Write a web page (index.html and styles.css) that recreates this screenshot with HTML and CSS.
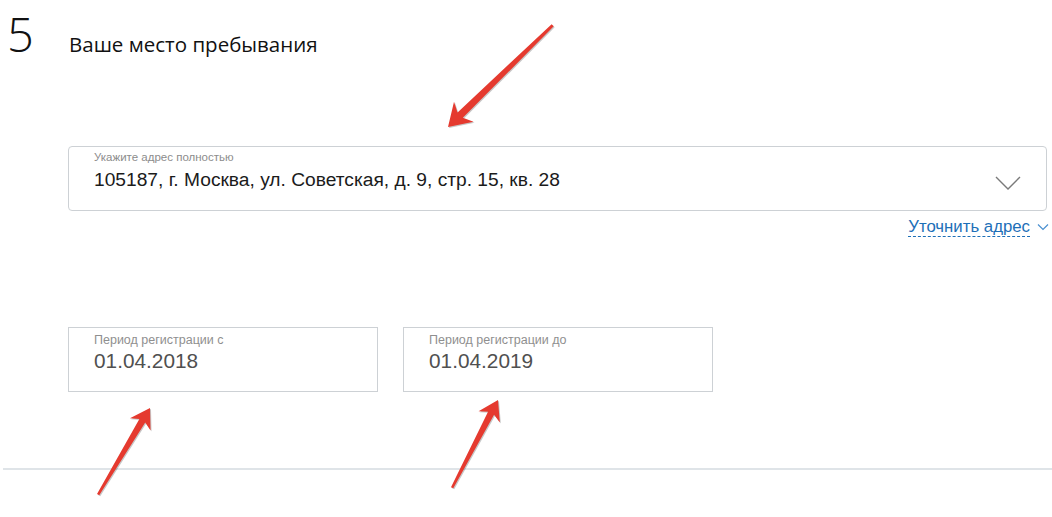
FILE: index.html
```html
<!DOCTYPE html>
<html lang="ru">
<head>
<meta charset="utf-8">
<title>Ваше место пребывания</title>
<link rel="stylesheet" href="styles.css">
</head>
<body>
<div class="page">
  <header class="step-head">
    <span class="step-num">5</span>
    <h2 class="step-title">Ваше место пребывания</h2>
  </header>

  <section class="step-body">
    <div class="field field-address">
      <div class="field-inner">
        <div class="field-label">Укажите адрес полностью</div>
        <div class="field-value">105187, г. Москва, ул. Советская, д. 9, стр. 15, кв. 28</div>
      </div>
      <svg class="select-chevron" width="26" height="14" viewBox="0 0 26 14"><path d="M1 1 L13 13 L25 1" fill="none" stroke="#7a7a7a" stroke-width="1.4"/></svg>
    </div>

    <div class="refine">
      <a class="refine-link" href="#">Уточнить адрес</a>
      <svg class="refine-chevron" width="12" height="8" viewBox="0 0 12 8"><path d="M1 1.5 L6 6.5 L11 1.5" fill="none" stroke="#4a90d0" stroke-width="1.2"/></svg>
    </div>

    <div class="dates">
      <div class="field field-date">
        <div class="field-label date-label">Период регистрации с</div>
        <div class="field-value date-value">01.04.2018</div>
      </div>
      <div class="field field-date">
        <div class="field-label date-label">Период регистрации до</div>
        <div class="field-value date-value">01.04.2019</div>
      </div>
    </div>
  </section>

  <div class="divider"></div>

  <svg class="arrows" width="1052" height="517" viewBox="0 0 1052 517">
    <g fill="#e53a2f">
      <polygon transform="translate(448 127) rotate(135.8)" points="0,0 -22,-14 -17,-3.8 -146,-1.5 -146,1.5 -17,3.8 -22,14"/>
      <polygon transform="translate(150 408) rotate(-59.1)" points="0,0 -19,-12 -15,-3.4 -101,-1.3 -101,1.3 -15,3.4 -19,12"/>
      <polygon transform="translate(498 400) rotate(-62.4)" points="0,0 -19,-12 -15,-3.4 -99,-1.3 -99,1.3 -15,3.4 -19,12"/>
    </g>
  </svg>
</div>
</body>
</html>
```

FILE: styles.css
```css
* { box-sizing: border-box; }

html, body {
  margin: 0;
  padding: 0;
  background: #ffffff;
}

.page {
  position: relative;
  width: 1052px;
  height: 517px;
  overflow: hidden;
  font-family: "Liberation Sans", Arial, sans-serif;
}

.step-head {
  display: flex;
  align-items: baseline;
  height: 70px;
  padding-left: 7px;
  padding-top: 6px;
}

.step-num {
  width: 62px;
  font-family: "Open Sans", sans-serif;
  font-weight: 300;
  font-size: 47px;
  line-height: 56px;
  color: #111;
}

.step-title {
  margin: 0;
  font-family: "Open Sans", sans-serif;
  font-weight: 500;
  font-size: 20.5px;
  color: #111;
}

.step-body {
  margin-top: 76px;
  padding-left: 68px;
  width: 1047px;
}

.field {
  border: 1px solid #cdd1d5;
  background: #fff;
}

.field-address {
  display: flex;
  align-items: center;
  height: 65px;
  border-radius: 4px;
  padding: 4px 25px 0 25px;
}

.field-inner {
  flex: 1;
  align-self: flex-start;
}

.field-label {
  font-size: 11.5px;
  line-height: 13px;
  color: #8c8c8c;
}

.field-value {
  margin-top: 4px;
  font-size: 19.2px;
  line-height: 24px;
  color: #1b1b1b;
}

.select-chevron {
  margin-top: 4px;
}

.refine {
  display: flex;
  justify-content: flex-end;
  align-items: center;
  gap: 7px;
  margin-top: 4px;
  height: 24px;
}

.refine-chevron {
  margin-right: -2px;
}

.refine-link {
  font-size: 16.8px;
  line-height: 19px;
  color: #1d6fb8;
  text-decoration: none;
  border-bottom: 1px dashed #1d6fb8;
}

.dates {
  display: flex;
  gap: 25px;
  margin-top: 88px;
}

.field-date {
  width: 310px;
  height: 65px;
  padding: 5px 25px 0 25px;
}

.date-label {
  font-size: 12.5px;
  line-height: 14px;
  color: #8f8f8f;
}

.date-value {
  color: #505050;
  font-size: 20.8px;
  margin-top: 2px;
}

.divider {
  margin: 76px 0 0 3px;
  height: 2px;
  background: #dfe4e8;
}

.arrows {
  position: absolute;
  left: 0;
  top: 0;
  pointer-events: none;
  filter: drop-shadow(1px 1px 0.6px rgba(0, 0, 0, 0.22));
}
```
